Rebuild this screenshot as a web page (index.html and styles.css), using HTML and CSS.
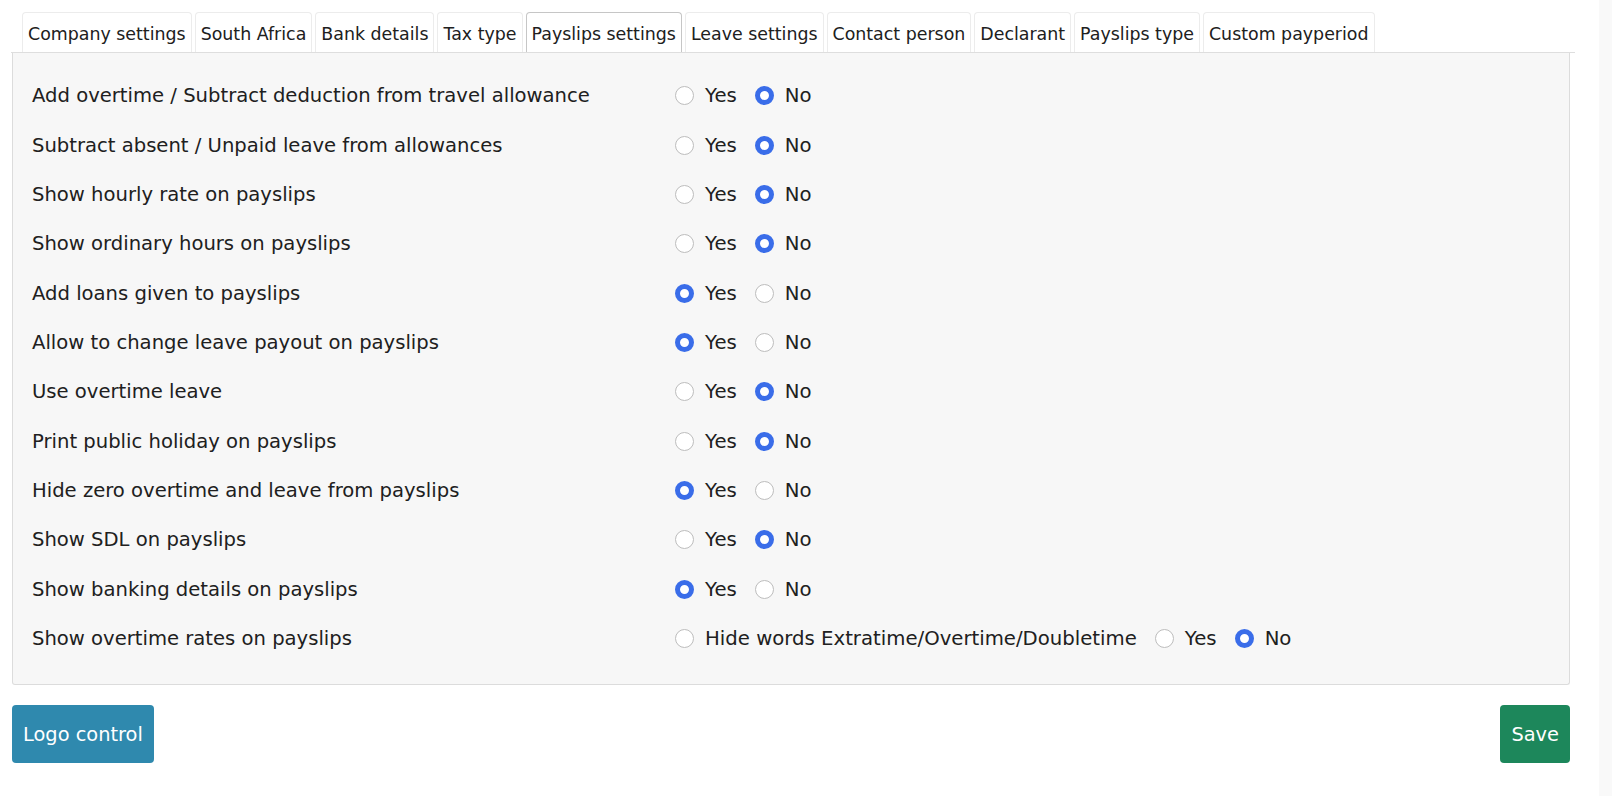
FILE: index.html
```html
<!DOCTYPE html>
<html lang="en">
<head>
<meta charset="utf-8">
<title>Payslips settings</title>
<link rel="stylesheet" href="styles.css">
</head>
<body>
<div class="page">
  <main class="content">
    <nav class="tabs">
      <a class="tab">Company settings</a>
      <a class="tab">South Africa</a>
      <a class="tab">Bank details</a>
      <a class="tab">Tax type</a>
      <a class="tab active">Payslips settings</a>
      <a class="tab">Leave settings</a>
      <a class="tab">Contact person</a>
      <a class="tab">Declarant</a>
      <a class="tab">Payslips type</a>
      <a class="tab">Custom payperiod</a>
    </nav>
    <section class="panel">
      <div class="row"><span class="label">Add overtime / Subtract deduction from travel allowance</span>
        <div class="options"><label class="opt"><input type="radio" name="r1">Yes</label><label class="opt"><input type="radio" name="r1" checked>No</label></div></div>
      <div class="row"><span class="label">Subtract absent / Unpaid leave from allowances</span>
        <div class="options"><label class="opt"><input type="radio" name="r2">Yes</label><label class="opt"><input type="radio" name="r2" checked>No</label></div></div>
      <div class="row"><span class="label">Show hourly rate on payslips</span>
        <div class="options"><label class="opt"><input type="radio" name="r3">Yes</label><label class="opt"><input type="radio" name="r3" checked>No</label></div></div>
      <div class="row"><span class="label">Show ordinary hours on payslips</span>
        <div class="options"><label class="opt"><input type="radio" name="r4">Yes</label><label class="opt"><input type="radio" name="r4" checked>No</label></div></div>
      <div class="row"><span class="label">Add loans given to payslips</span>
        <div class="options"><label class="opt"><input type="radio" name="r5" checked>Yes</label><label class="opt"><input type="radio" name="r5">No</label></div></div>
      <div class="row"><span class="label">Allow to change leave payout on payslips</span>
        <div class="options"><label class="opt"><input type="radio" name="r6" checked>Yes</label><label class="opt"><input type="radio" name="r6">No</label></div></div>
      <div class="row"><span class="label">Use overtime leave</span>
        <div class="options"><label class="opt"><input type="radio" name="r7">Yes</label><label class="opt"><input type="radio" name="r7" checked>No</label></div></div>
      <div class="row"><span class="label">Print public holiday on payslips</span>
        <div class="options"><label class="opt"><input type="radio" name="r8">Yes</label><label class="opt"><input type="radio" name="r8" checked>No</label></div></div>
      <div class="row"><span class="label">Hide zero overtime and leave from payslips</span>
        <div class="options"><label class="opt"><input type="radio" name="r9" checked>Yes</label><label class="opt"><input type="radio" name="r9">No</label></div></div>
      <div class="row"><span class="label">Show SDL on payslips</span>
        <div class="options"><label class="opt"><input type="radio" name="r10">Yes</label><label class="opt"><input type="radio" name="r10" checked>No</label></div></div>
      <div class="row"><span class="label">Show banking details on payslips</span>
        <div class="options"><label class="opt"><input type="radio" name="r11" checked>Yes</label><label class="opt"><input type="radio" name="r11">No</label></div></div>
      <div class="row"><span class="label">Show overtime rates on payslips</span>
        <div class="options"><label class="opt"><input type="radio" name="r12">Hide words Extratime/Overtime/Doubletime</label><label class="opt"><input type="radio" name="r12">Yes</label><label class="opt"><input type="radio" name="r12" checked>No</label></div></div>
    </section>
    <div class="actions">
      <button class="btn btn-info" type="button">Logo control</button>
      <button class="btn btn-success" type="button">Save</button>
    </div>
  </main>
  <div class="scroll-strip"></div>
</div>
</body>
</html>
```

FILE: styles.css
```css
html, body {
  margin: 0;
  padding: 0;
  background: #ffffff;
}
body {
  font-family: "DejaVu Sans", Verdana, sans-serif;
  color: #202020;
}
.page {
  display: flex;
  min-height: 796px;
}
.content {
  flex: 1;
  padding: 12px 29px 0 12px;
  min-width: 0;
}
.scroll-strip {
  width: 13px;
  background: #f9f9f9;
}
.tabs {
  display: flex;
  gap: 3px;
  padding-left: 11px;
  margin: 0 -5px 0 -1px;
  border-bottom: 1px solid #dedede;
}
.tab {
  height: 40px;
  box-sizing: border-box;
  display: flex;
  align-items: center;
  padding: 2px 5px 0 5px;
  font-size: 17.4px;
  color: #202020;
  background: #ffffff;
  border: 1px solid #ececec;
  border-bottom: none;
  border-radius: 4px 4px 0 0;
  white-space: nowrap;
}
.tab.active {
  border-color: #c6c6c6;
}
.panel {
  background: #f7f7f7;
  border: 1px solid #dcdcdc;
  border-top: none;
  border-radius: 0 0 3px 3px;
  padding: 18px 19px 21px 19px;
  display: grid;
  grid-auto-rows: 49.35px;
}
.row {
  display: grid;
  grid-template-columns: 643px 1fr;
  align-items: center;
  font-size: 19.6px;
}
.label {
  white-space: nowrap;
}
.options {
  display: flex;
  align-items: center;
  gap: 18px;
}
.opt {
  display: flex;
  align-items: center;
  gap: 11px;
  font-size: 19.7px;
  white-space: nowrap;
}
.opt input {
  appearance: none;
  -webkit-appearance: none;
  margin: 0;
  width: 19px;
  height: 19px;
  box-sizing: border-box;
  border: 1px solid #bdbdbd;
  border-radius: 50%;
  background: #ffffff;
  flex: none;
}
.opt input:checked {
  border: 5.5px solid #3a6de9;
  background: #ffffff;
}
.actions {
  display: flex;
  justify-content: space-between;
  margin-top: 20px;
}
.btn {
  height: 58px;
  padding: 0 11px;
  border: none;
  border-radius: 4px;
  font-family: "DejaVu Sans", Verdana, sans-serif;
  font-size: 19.4px;
  color: #ffffff;
}
.btn-info {
  background: #2f89ae;
}
.btn-success {
  background: #1d875b;
}
```
